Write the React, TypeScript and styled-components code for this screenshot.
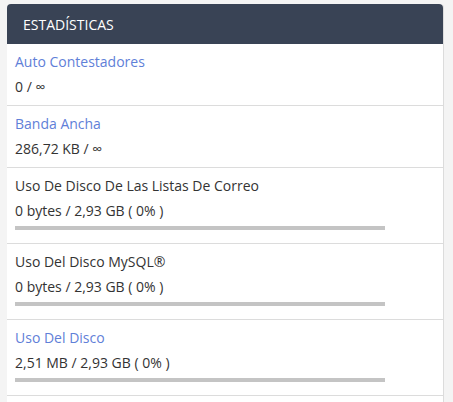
import React from "react";
import styled, { createGlobalStyle } from "styled-components";

const GlobalStyle = createGlobalStyle`
  body {
    margin: 0;
    background: #f4f4f4;
    font-family: "Open Sans", "Liberation Sans", sans-serif;
  }
`;

const Page = styled.div`
  padding: 4px 9px 0 7px;
`;

const Panel = styled.div`
  background: #fff;
  border: 1px solid #dcdcdc;
  border-top: none;
  border-left: none;
  border-radius: 4px 4px 0 0;
`;

const Header = styled.div`
  height: 40px;
  display: flex;
  align-items: center;
  padding: 0 16px;
  background: #394355;
  color: #fff;
  font-size: 14px;
  text-transform: uppercase;
  border-radius: 4px 4px 0 0;
`;

const Row = styled.div`
  padding: 8px 8px;
  border-bottom: 1px solid #dcdcdc;
`;

type TitleProps = { $link?: boolean };

const Title = styled.div<TitleProps>`
  font-size: 14px;
  line-height: 20px;
  color: ${(p: TitleProps) => (p.$link ? "#5f80d8" : "#333")};
`;

const Value = styled.div`
  margin-top: 5px;
  font-size: 14px;
  line-height: 20px;
  color: #333;
`;

const Bar = styled.div`
  margin: 5px 0;
  width: 370px;
  height: 4px;
  background: #c4c4c4;
`;

const BarFill = styled.div`
  height: 100%;
  background: #5f80d8;
`;

type Stat = {
  title: string;
  value: string;
  link?: boolean;
  percent?: number;
};

const stats: Stat[] = [
  { title: "Auto Contestadores", value: "0 / ∞", link: true },
  { title: "Banda Ancha", value: "286,72 KB / ∞", link: true },
  {
    title: "Uso De Disco De Las Listas De Correo",
    value: "0 bytes / 2,93 GB ( 0% )",
    percent: 0,
  },
  { title: "Uso Del Disco MySQL®", value: "0 bytes / 2,93 GB ( 0% )", percent: 0 },
  { title: "Uso Del Disco", value: "2,51 MB / 2,93 GB ( 0% )", link: true, percent: 0 },
];

export default function App() {
  return (
    <Page>
      <GlobalStyle />
      <Panel>
        <Header>Estadísticas</Header>
        {stats.map((s) => (
          <Row key={s.title}>
            <Title $link={s.link}>{s.title}</Title>
            <Value>{s.value}</Value>
            {s.percent !== undefined && (
              <Bar>
                <BarFill style={{ width: `${s.percent}%` }} />
              </Bar>
            )}
          </Row>
        ))}
        <Row />
      </Panel>
    </Page>
  );
}
